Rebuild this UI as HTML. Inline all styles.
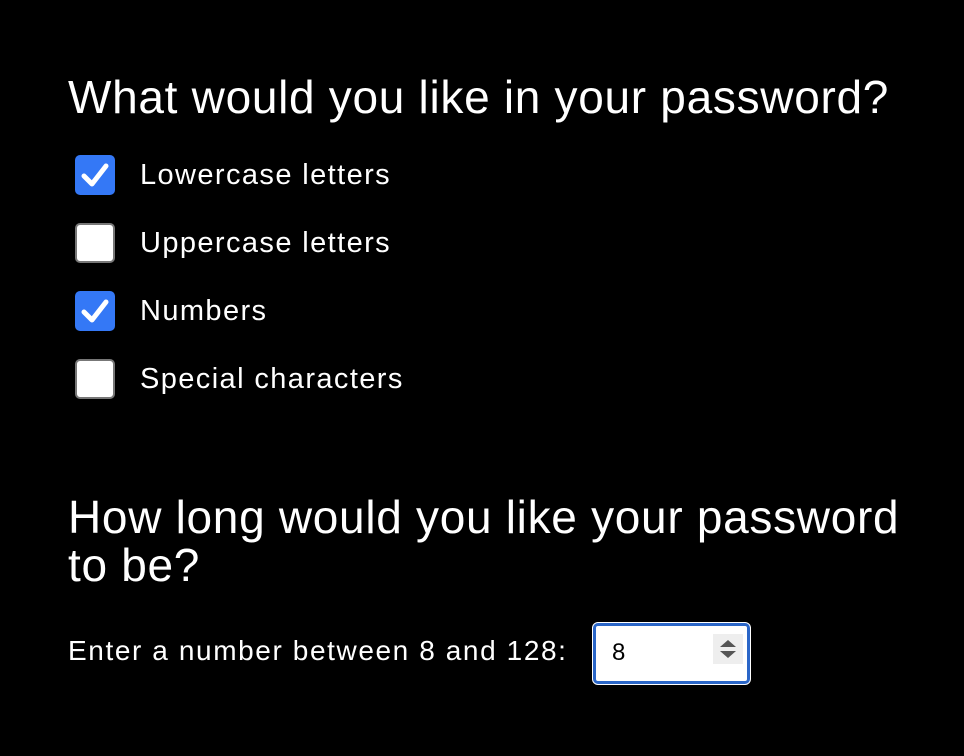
<!DOCTYPE html>
<html><head><style>
body{margin:0;width:964px;height:756px;background:#000;color:#fff;font-family:"Liberation Sans",sans-serif;position:relative;overflow:hidden}
.a{position:absolute;white-space:nowrap}
h1{position:absolute;margin:0;font-weight:normal;font-size:46px;line-height:52px;left:68px;letter-spacing:0.7px}
.cb{position:absolute;left:75px;width:40px;height:40px;border-radius:5px;box-sizing:border-box}
.on{background:#3478f6}
.off{background:#fff;border:2px solid #777}
.lb{position:absolute;left:140px;font-size:29px;line-height:32px;letter-spacing:1.4px}
</style></head><body>
<h1 style="top:71px">What would you like in your password?</h1>
<div class="cb on" style="top:155px"><svg width="40" height="40"><path d="M9 21 L17 29 L31 11" stroke="#fff" stroke-width="5" fill="none" stroke-linecap="round" stroke-linejoin="round"/></svg></div>
<div class="lb" style="top:159px">Lowercase letters</div>
<div class="cb off" style="top:223px"></div>
<div class="lb" style="top:227px">Uppercase letters</div>
<div class="cb on" style="top:291px"><svg width="40" height="40"><path d="M9 21 L17 29 L31 11" stroke="#fff" stroke-width="5" fill="none" stroke-linecap="round" stroke-linejoin="round"/></svg></div>
<div class="lb" style="top:295px">Numbers</div>
<div class="cb off" style="top:359px"></div>
<div class="lb" style="top:363px">Special characters</div>
<h1 style="top:493px;width:860px;line-height:48px;white-space:normal">How long would you like your password to be?</h1>
<div class="a" style="left:68px;top:635px;font-size:28px;line-height:32px;letter-spacing:1.6px">Enter a number between 8 and 128:</div>
<div class="a" style="left:592px;top:622px;width:159px;height:63px;box-sizing:border-box;background:#fff;border-radius:6px;padding:1px">
<div style="width:100%;height:100%;box-sizing:border-box;border:3px solid #2a66c8;border-radius:5px;position:relative">
<div style="position:absolute;left:16px;top:13px;color:#000;font-size:24px">8</div>
<div style="position:absolute;left:117px;top:8px;width:30px;height:30px;background:#eee"><svg width="30" height="30"><path d="M7 13 L15 6 L23 13Z M7 17 L15 24 L23 17Z" fill="#555"/></svg></div>
</div></div>
</body></html>
